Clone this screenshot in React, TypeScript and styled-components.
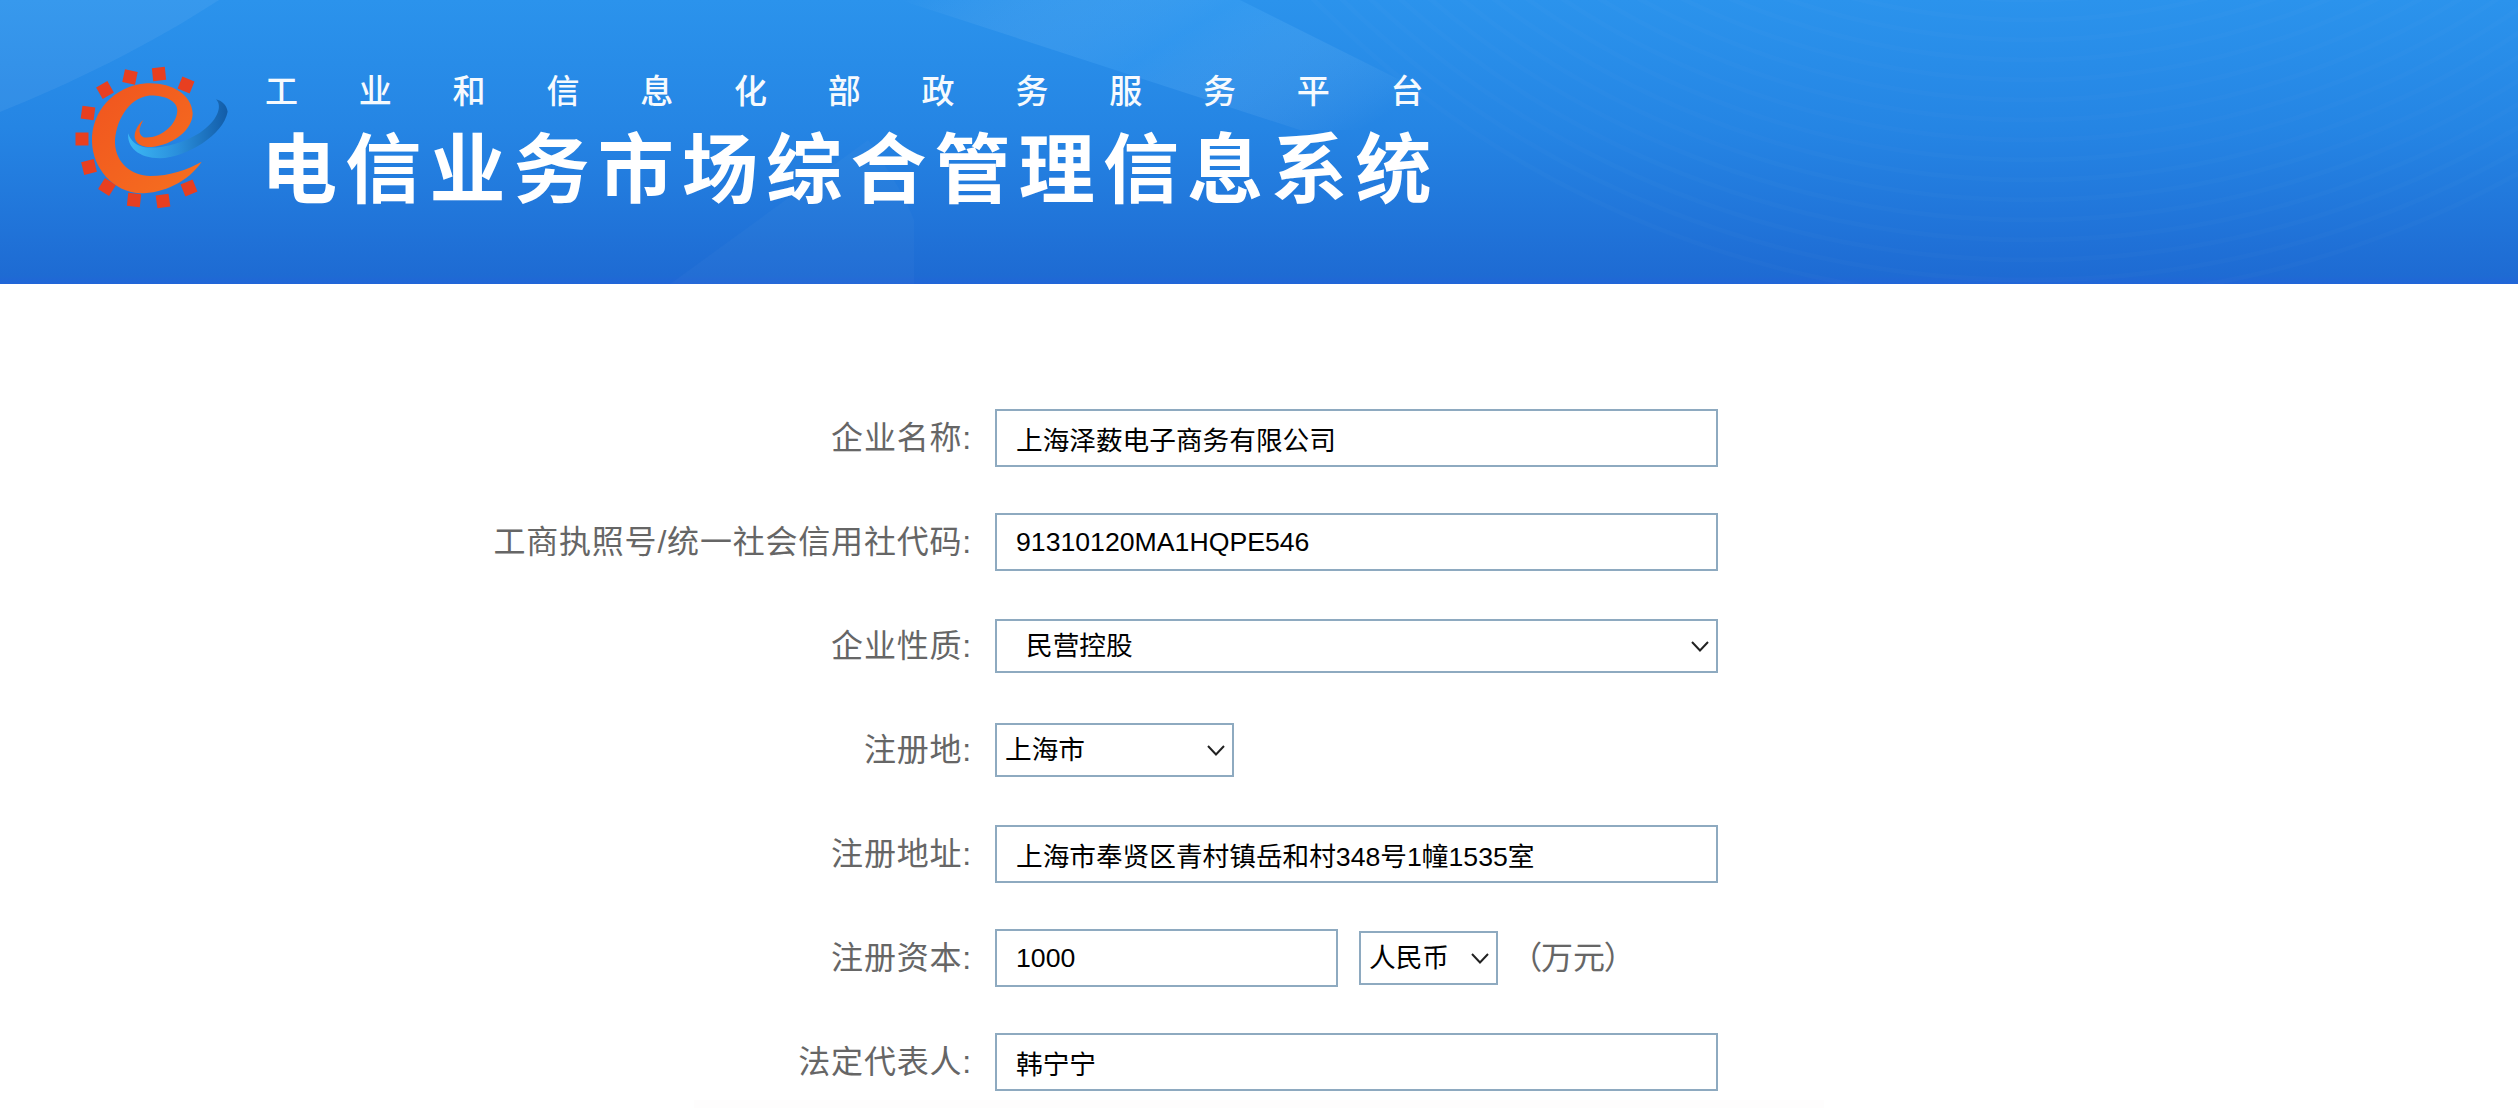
import React from 'react'
import styled, { createGlobalStyle } from 'styled-components'

const GlobalStyle = createGlobalStyle`
  html, body {
    margin: 0;
    padding: 0;
    background: #fff;
  }
  body {
    width: 2518px;
    height: 1108px;
    overflow: hidden;
    font-family: "Liberation Sans", "Noto Sans CJK SC", sans-serif;
  }
`

const CHEVRON = `url("data:image/svg+xml,%3Csvg xmlns='http://www.w3.org/2000/svg' width='18' height='11' viewBox='0 0 18 11'%3E%3Cpath d='M1 1l8 8.5L17 1' fill='none' stroke='%23222' stroke-width='2'/%3E%3C/svg%3E")`

const Page = styled.div`
  width: 2518px;
  height: 1108px;
  display: flex;
  flex-direction: column;
  background: #fff;
`

const Header = styled.header`
  position: relative;
  flex: none;
  height: 284px;
  display: flex;
  align-items: flex-start;
  padding: 50px 0 0 60px;
  box-sizing: border-box;
  overflow: hidden;
  background: linear-gradient(to bottom, #2b93ec 0%, #2585e4 45%, #1e6bd3 97%, #2165d8 100%);
`

const HeaderArt = styled.svg`
  position: absolute;
  left: 0;
  top: 0;
  width: 2518px;
  height: 284px;
`

const Logo = styled.svg`
  position: relative;
  flex: none;
  width: 190px;
  height: 170px;
`

const TitleBlock = styled.div`
  position: relative;
  display: flex;
  flex-direction: column;
  margin-left: 15px;
  color: #fff;
  white-space: nowrap;
`

const SubTitle = styled.div`
  font-size: 33px;
  line-height: 44px;
  margin-top: 20px;
  font-weight: 500;
  letter-spacing: 60.8px;
  opacity: 0.96;
`

const MainTitle = styled.h1`
  margin: 13px 0 0 -4px;
  font-size: 76px;
  line-height: 88px;
  font-weight: 700;
  letter-spacing: 8.2px;
`

const Form = styled.form`
  flex: 1;
  display: flex;
  flex-direction: column;
  padding-top: 102px;
  background: linear-gradient(#fefdfd, #fefdfd) no-repeat center bottom / 1130px 14px;
`

const Row = styled.div`
  height: 104px;
  display: flex;
  align-items: center;
`

const Label = styled.label`
  flex: none;
  width: 972px;
  padding-right: 23px;
  margin-bottom: 6px;
  text-align: right;
  font-size: 32px;
  letter-spacing: 0.8px;
  color: #666;
  white-space: nowrap;
`

const TextInput = styled.input<{ $width?: number }>`
  width: ${(p) => p.$width ?? 723}px;
  height: 58px;
  box-sizing: border-box;
  padding: 0 19px;
  border: 2px solid #8eaac0;
  border-radius: 0;
  outline: none;
  background: #fff;
  color: #000;
  font-family: inherit;
  font-size: 26.67px;
`

const Select = styled.select<{ $width: number; $pad: number; $gap?: number }>`
  appearance: none;
  width: ${(p) => p.$width}px;
  height: 54px;
  margin-left: ${(p) => p.$gap ?? 0}px;
  box-sizing: border-box;
  padding: 0 30px 0 ${(p) => p.$pad}px;
  border: 2px solid #8eaac0;
  border-radius: 0;
  outline: none;
  color: #000;
  font-family: inherit;
  font-size: 26.67px;
  background: #fff ${CHEVRON} no-repeat right 7px center;
`

const Unit = styled.span`
  margin: 0 0 6px 27px;
  font-size: 32px;
  font-feature-settings: "palt";
  color: #666;
`

const squares = [
  [70, 27, 12],
  [99, 24, -6],
  [126, 35, 22],
  [45, 40, -30],
  [28, 63, 8],
  [22, 89, 0],
  [29, 117, -14],
  [47, 137, 32],
  [74, 150, 6],
  [103, 151, -8],
  [129, 138, -22],
]

const rings = Array.from({ length: 30 }, (_, i) => 1004 - i * 20)

const App: React.FC = () => {
  return (
    <Page>
      <GlobalStyle />
      <Header>
        <HeaderArt viewBox="0 0 2518 284">
          <defs>
            <linearGradient id="band" x1="0" y1="0" x2="1" y2="0.35">
              <stop offset="0" stopColor="#fff" stopOpacity="0" />
              <stop offset="0.5" stopColor="#4db2ff" stopOpacity="0.22" />
              <stop offset="1" stopColor="#fff" stopOpacity="0" />
            </linearGradient>
          </defs>
          <path d="M0 112C70 84 150 45 219 0H0Z" fill="#fff" opacity="0.06" />
          <path d="M670 284L868 140C885 165 905 195 914 220V284Z" fill="#fff" opacity="0.025" />
          <path d="M900 0H1240L1500 130L1300 130Z" fill="url(#band)" />
          {rings.map((r) => (
            <circle key={r} cx="2030" cy="-704" r={r} fill="none" stroke="#fff" strokeOpacity="0.014" strokeWidth="5" />
          ))}
        </HeaderArt>
        <Logo viewBox="0 0 190 170">
          <defs>
            <linearGradient id="swirl" x1="0" y1="0" x2="1" y2="0">
              <stop offset="0" stopColor="#3cb8f5" />
              <stop offset="0.5" stopColor="#2a8fdc" />
              <stop offset="1" stopColor="#125ca8" />
            </linearGradient>
            <linearGradient id="crescent" x1="0" y1="0" x2="1" y2="1">
              <stop offset="0" stopColor="#f0541f" />
              <stop offset="1" stopColor="#f6701f" />
            </linearGradient>
          </defs>
          {squares.map(([x, y, a]) => (
            <rect
              key={`${x}-${y}`}
              x={x - 6.5}
              y={y - 6.5}
              width="13"
              height="13"
              fill="#e83f20"
              transform={`rotate(${a} ${x} ${y})`}
            />
          ))}
          <g transform="scale(0.3333)">
            <path
              fill="url(#swirl)"
              d="M205 250C200 290 235 325 300 325C380 322 490 255 503 185C500 165 485 152 468 148C490 170 470 215 420 248C370 280 300 297 255 292C230 288 210 272 205 250Z"
            />
            <path
              fill="url(#crescent)"
              d="M425 335C385 395 310 430 240 430C160 425 98 355 96 275C94 185 160 108 260 100C330 96 395 130 398 190C398 240 340 285 275 291C235 293 215 270 228 240C233 228 240 218 250 210C238 232 232 250 250 262C300 268 352 225 352 180C350 150 310 135 265 137C205 145 165 215 165 280C168 340 215 378 270 378C330 378 385 358 425 335Z"
            />
          </g>
        </Logo>
        <TitleBlock>
          <SubTitle>工业和信息化部政务服务平台</SubTitle>
          <MainTitle>电信业务市场综合管理信息系统</MainTitle>
        </TitleBlock>
      </Header>
      <Form>
        <Row>
          <Label>企业名称:</Label>
          <TextInput readOnly value="上海泽薮电子商务有限公司" />
        </Row>
        <Row>
          <Label>工商执照号/统一社会信用社代码:</Label>
          <TextInput readOnly value="91310120MA1HQPE546" />
        </Row>
        <Row>
          <Label>企业性质:</Label>
          <Select $width={723} $pad={29} defaultValue="民营控股">
            <option>民营控股</option>
          </Select>
        </Row>
        <Row>
          <Label>注册地:</Label>
          <Select $width={239} $pad={8} defaultValue="上海市">
            <option>上海市</option>
          </Select>
        </Row>
        <Row>
          <Label>注册地址:</Label>
          <TextInput readOnly value="上海市奉贤区青村镇岳和村348号1幢1535室" />
        </Row>
        <Row>
          <Label>注册资本:</Label>
          <TextInput $width={343} readOnly value="1000" />
          <Select $width={139} $pad={8} $gap={21} defaultValue="人民币">
            <option>人民币</option>
          </Select>
          <Unit>（万元）</Unit>
        </Row>
        <Row>
          <Label>法定代表人:</Label>
          <TextInput readOnly value="韩宁宁" />
        </Row>
      </Form>
    </Page>
  )
}

export default App
